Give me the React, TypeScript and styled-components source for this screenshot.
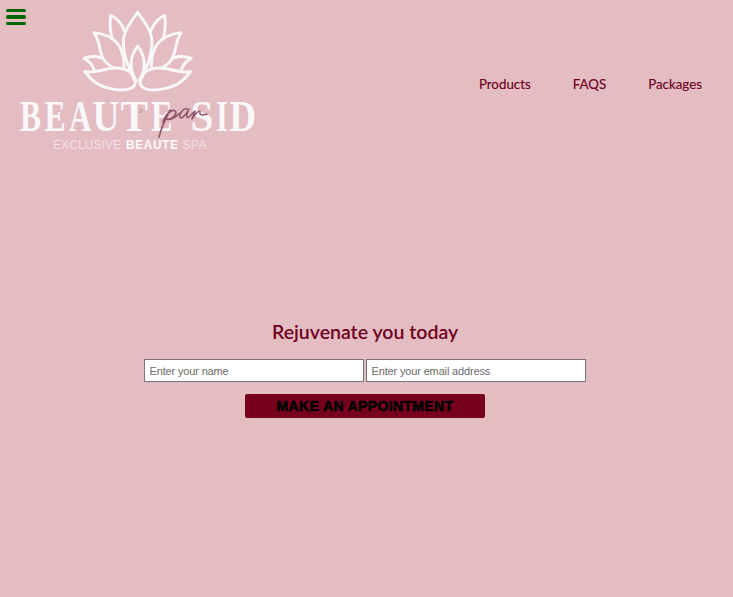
import React from 'react';
import styled, { createGlobalStyle } from 'styled-components';

const GlobalStyle = createGlobalStyle`
  * { box-sizing: border-box; }
  body { margin: 0; background: #e4bdc2; font-family: Lato, sans-serif; color: #700020; }
`;

const Page = styled.div`
  min-height: 597px;
  display: flex;
  flex-direction: column;
  background: #e4bdc2;
`;

const MenuButton = styled.button`
  position: fixed;
  top: 5px;
  left: 0;
  width: 32px;
  height: 24px;
  padding: 4px 6px;
  border: 0;
  background: #e5bfc0;
  display: flex;
  flex-direction: column;
  justify-content: space-between;
`;

const Bar = styled.span<{ $thick?: boolean }>`
  width: 20px;
  height: ${(p) => (p.$thick ? 4 : 3)}px;
  border-radius: 2px;
  background: #006400;
`;

const Header = styled.header`
  display: flex;
  justify-content: space-between;
  height: 168px;
`;

const LogoArt = styled.svg`
  width: 270px;
  height: 165px;
  display: block;
`;

const Nav = styled.nav`
  display: flex;
  align-items: center;
  height: 168px;
  gap: 42px;
  padding-right: 31px;
`;

const NavLink = styled.a`
  font-size: 13.33px;
  line-height: 20px;
  color: #700020;
  text-decoration: none;
  -webkit-text-stroke: 0.15px #700020;
`;

const Booking = styled.form`
  display: flex;
  flex-direction: column;
  align-items: center;
  width: 730px;
  padding-top: 152px;
`;

const Title = styled.h1`
  margin: 0 0 15px;
  font-size: 19.5px;
  line-height: 24px;
  font-weight: 600;
`;

const Fields = styled.div`
  display: flex;
  gap: 2px;
`;

const Field = styled.input`
  width: 220px;
  height: 23px;
  padding: 1px 5px 1px 4.5px;
  border: 1px solid #767676;
  border-radius: 0;
  background: #fff;
  font: 11px 'Liberation Sans', sans-serif;
  letter-spacing: -0.15px;
  &::placeholder { color: #6b6b6b; opacity: 1; }
`;

const Submit = styled.button`
  width: 240px;
  height: 24px;
  margin-top: 12px;
  padding: 0;
  border: 0;
  border-radius: 2px;
  background: #78001f;
  color: #000;
  font: 700 14px/24px 'Liberation Sans', sans-serif;
  letter-spacing: 0.36px;
  -webkit-text-stroke: 0.6px #000;
`;

const letters: [string, number, number][] = [
  ['B', 20, 21], ['E', 44.5, 21], ['A', 69, 22.5], ['U', 92.5, 27], ['T', 120.5, 27.5],
  ['E', 151, 21.5], ['S', 190.5, 23], ['I', 216, 12], ['D', 229.5, 26.5],
];

const LeftPetals = () => (
  <>
    <path d="M413 37C387 73 369 96 370 131C371 171 386 202 405 243" />
    <path d="M413 139C389 169 386 207 408 241" />
    <path d="M374 93C364 69 350 53 332 46C328 74 330 95 337 118" />
    <path d="M372 206C373 146 353 106 282 98C305 132 294 154 312 180Q320 192 342 204" />
    <path d="M306 174Q278 165 252 175Q272 184 282 208" />
    <path d="M254 214C288 222 306 206 342 204C381 202 408 222 406 249C402 270 372 272 343 268C302 262 279 248 254 214Z" />
  </>
);

const Logo = () => (
  <LogoArt viewBox="0 0 270 165" role="img" aria-label="Beaute par Sid">
    <g transform="scale(.333333)" fill="none" stroke="#faf7f8" strokeWidth="8.8" strokeLinejoin="round" strokeLinecap="round">
      <LeftPetals />
      <g transform="translate(826 0) scale(-1 1)"><LeftPetals /></g>
    </g>
    <g fill="#faf7f8" fontFamily="'Liberation Serif', serif" fontSize="43.5" fontWeight="700">
      {letters.map(([letter, x, width]) => (
        <text key={x} x={x} y="131" textLength={width} lengthAdjust="spacingAndGlyphs">{letter}</text>
      ))}
    </g>
    <g fontFamily="'Liberation Sans', sans-serif" fontSize="12" fill="#f3e0e4">
      <text x="53" y="149" textLength="68" lengthAdjust="spacing">EXCLUSIVE</text>
      <text x="126" y="149" textLength="52" lengthAdjust="spacing" fontWeight="700" fill="#fdf8fa">BEAUTE</text>
      <text x="182.5" y="149" textLength="24" lengthAdjust="spacing">SPA</text>
    </g>
    <g fill="none" stroke="#8f5369" strokeLinecap="round" strokeLinejoin="round">
      <path strokeWidth="1.6" d="M170 110C167 117 162 125 159 137M163 122C166 112 176 107 176 113C175 118 169 120 166 119C171 121 176 117 180 113" />
      <path strokeWidth="1.5" d="M187 109C183 108 179 114 180 117C181 120 186 115 189 109C186 115 186 119 189 117L195 111C195 114 192 117 192 119C195 114 200 109 200 112C199 116 203 115 207 114" />
      <path strokeWidth=".6" stroke="#999" d="M139 109L142 110L140 112Q143 113 142 110M138 112L141 113" />
    </g>
  </LogoArt>
);

export default function App() {
  return (
    <>
      <GlobalStyle />
      <Page>
        <Header>
          <Logo />
          <Nav>
            <NavLink>Products</NavLink>
            <NavLink>FAQS</NavLink>
            <NavLink>Packages</NavLink>
          </Nav>
        </Header>
        <Booking>
          <Title>Rejuvenate you today</Title>
          <Fields>
            <Field placeholder="Enter your name" />
            <Field placeholder="Enter your email address" />
          </Fields>
          <Submit type="button">MAKE AN APPOINTMENT</Submit>
        </Booking>
        <MenuButton aria-label="Menu"><Bar /><Bar $thick /><Bar /></MenuButton>
      </Page>
    </>
  );
}
